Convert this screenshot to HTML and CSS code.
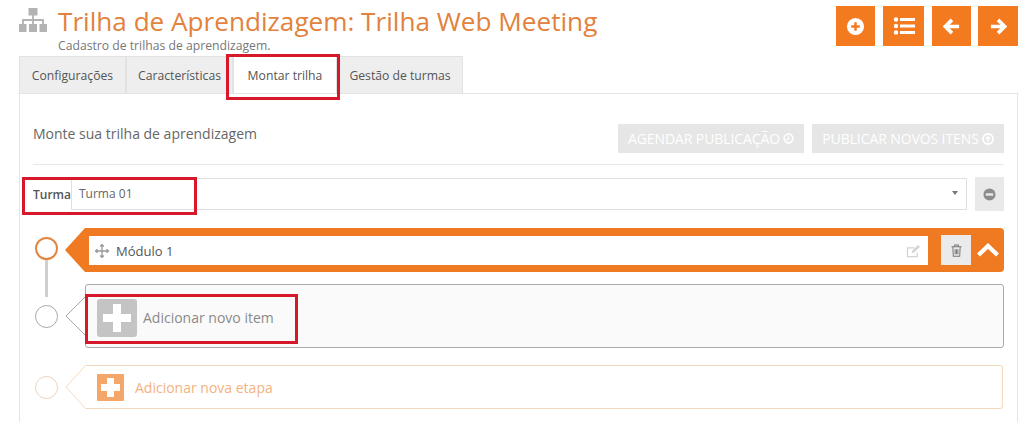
FILE: index.html
```html
<!DOCTYPE html>
<html lang="pt-BR">
<head>
<meta charset="utf-8">
<title>Trilha de Aprendizagem</title>
<link rel="stylesheet" href="styles.css">
</head>
<body>
<div class="page">
  <header class="top">
    <svg class="site-icon" viewBox="0 0 28 24" width="28" height="24"><path d="M9.500 0h9v7.500h-9zM0 16h7.500v8H0zM10 16h8v8h-8zM20.500 16H28v8h-7.500z" fill="#b3b3b3"/><path d="M14 7v5M4 16v-4h20v4M14 12v4" fill="none" stroke="#b3b3b3" stroke-width="1.800"/></svg>
    <div class="titles">
      <h1>Trilha de Aprendizagem: Trilha Web Meeting</h1>
      <p>Cadastro de trilhas de aprendizagem.</p>
    </div>
    <nav class="actions">
      <a class="act w39"><svg viewBox="0 0 20 20" width="19" height="19"><circle cx="10" cy="10" r="9" fill="#fff"/><path d="M10 5.500v9M5.500 10h9" stroke="#f47a20" stroke-width="2.600"/></svg></a>
      <a class="act w41"><svg viewBox="0 0 22 20" width="22" height="20"><g fill="#fff"><circle cx="3" cy="3.500" r="2.200"/><circle cx="3" cy="10" r="2.200"/><circle cx="3" cy="16.500" r="2.200"/><rect x="7" y="2" width="15" height="3"/><rect x="7" y="8.500" width="15" height="3"/><rect x="7" y="15" width="15" height="3"/></g></svg></a>
      <a class="act w39"><svg viewBox="0 0 20 20" width="19" height="19"><path d="M18 10H4M10.500 3L3.500 10l7 7" fill="none" stroke="#fff" stroke-width="3.800"/></svg></a>
      <a class="act w40 last"><svg viewBox="0 0 20 20" width="19" height="19"><path d="M2 10h14M9.500 3l7 7-7 7" fill="none" stroke="#fff" stroke-width="3.800"/></svg></a>
    </nav>
  </header>

  <ul class="tabs">
    <li class="tab">Configurações</li>
    <li class="tab">Características</li>
    <li class="tab active">Montar trilha</li>
    <li class="tab">Gestão de turmas</li>
  </ul>

  <section class="panel">
    <div class="panel-head">
      <h2>Monte sua trilha de aprendizagem</h2>
      <div class="publish">
        <button class="pub w186">AGENDAR PUBLICAÇÃO <svg viewBox="0 0 12 12" width="11" height="11"><circle cx="6" cy="6" r="4.700" fill="none" stroke="#fff" stroke-width="1.800"/><path d="M6 3.500V6.500L4 8" fill="none" stroke="#fff" stroke-width="1.300"/></svg></button>
        <button class="pub w192">PUBLICAR NOVOS ITENS <svg viewBox="0 0 12 12" width="12" height="12"><circle cx="6" cy="6" r="5" fill="none" stroke="#fff" stroke-width="1.800"/><path d="M6 9V3.800M3.800 6L6 3.800 8.200 6" fill="none" stroke="#fff" stroke-width="1.500"/></svg></button>
      </div>
    </div>

    <div class="turma-row">
      <label class="turma-label">Turma</label>
      <div class="select"><span>Turma 01</span><i class="caret"></i></div>
      <button class="minus"><svg viewBox="0 0 14 14" width="13" height="13"><circle cx="7" cy="7" r="6.500" fill="#8c8c8c"/><rect x="3" y="5.700" width="8" height="2.600" fill="#e9e9e9"/></svg></button>
    </div>

    <div class="track module-row">
      <span class="node node-orange"></span>
      <svg class="tip" viewBox="0 0 20 44" width="20" height="44"><path d="M20 0L0 22l20 22z" fill="#f07a22"/></svg>
      <div class="module-bar">
        <div class="module-input">
          <svg viewBox="0 0 14 14" width="14" height="14"><path d="M7 .500v13M.500 7h13M5.200 2.500L7 .500l1.800 2M5.200 11.500L7 13.500l1.800-2M2.500 5.200L.500 7l2 1.800M11.500 5.200L13.500 7l-2 1.800" fill="none" stroke="#999" stroke-width="1.300"/></svg>
          <span>Módulo 1</span>
          <svg class="edit" viewBox="0 0 16 14" width="15" height="13"><path d="M12 8v4.500H1.500V3H9" fill="none" stroke="#d2d2d2" stroke-width="1.300"/><path d="M6 8.500l.6-2.300L13 0l2 2-6.500 6z" fill="#d2d2d2"/></svg>
        </div>
        <button class="trash"><svg viewBox="0 0 12 14" width="11" height="13"><path d="M.500 3h11M4 3V1h4v2M2 3l.5 10.300h7L10 3M4.500 5.500v5.500M6 5.500v5.500M7.500 5.500v5.500" fill="none" stroke="#777" stroke-width="1.100"/></svg></button>
        <svg class="chevron" viewBox="0 0 24 14" width="24" height="14"><path d="M2.500 12L12 3l9.500 9" fill="none" stroke="#fff" stroke-width="4.200"/></svg>
      </div>
    </div>

    <div class="track item-row">
      <span class="node node-gray"></span>
      <svg class="tip" viewBox="0 0 21 40" width="21" height="40"><path d="M20.500 0.500L1 20l19.500 19.500" fill="none" stroke="#a8a8a8" stroke-width="1"/></svg>
      <div class="item-box">
        <span class="plus plus-gray"></span>
        <span class="item-text">Adicionar novo item</span>
      </div>
    </div>

    <div class="track step-row">
      <span class="node node-peach"></span>
      <svg class="tip" viewBox="0 0 21 44" width="21" height="44"><path d="M20.500 0.500L1 22l19.500 21.500" fill="none" stroke="#f5d9bf" stroke-width="1"/></svg>
      <div class="step-box">
        <span class="plus plus-orange"></span>
        <span class="step-text">Adicionar nova etapa</span>
      </div>
    </div>
  </section>

  <div class="mark mark-tab"></div>
  <div class="mark mark-turma"></div>
  <div class="mark mark-item"></div>
</div>
</body>
</html>
```
FILE: styles.css
```css
* { box-sizing: border-box; }
html, body { margin: 0; height: 422px; overflow: hidden; background: #fff; }
body { font-family: "Open Sans", "Liberation Sans", sans-serif; color: #666; }
.page { position: relative; width: 1024px; height: 422px; padding: 6px 6px 0 19px; }

.top { display: flex; align-items: flex-start; height: 50px; }
.site-icon { margin-top: 2px; flex: none; }
.titles { margin-left: 11px; flex: 1; }
h1 { margin: 0; font-size: 26.15px; line-height: 30px; font-weight: 400; color: #e2823c; white-space: nowrap; }
.titles p { margin: 3px 0 0; font-size: 12.2px; line-height: 14px; color: #777; }
.actions { display: flex; gap: 8px; }
.act { height: 40px; background: #f47a20; display: flex; align-items: center; justify-content: center; }
.w39 { width: 39px; }
.w40 { width: 40px; }
.w41 { width: 41px; }
.last { margin-left: -1px; }

.tabs { list-style: none; margin: 0; padding: 0; display: flex; height: 37px; }
.tab { background: #eeeeee; border: 1px solid #e2e2e2; border-bottom: 0; font-size: 12.2px; font-weight: 500; color: #555; display: flex; align-items: center; justify-content: center; padding: 0 12px; white-space: nowrap; }
.tab:nth-child(1) { width: 107px; }
.tab:nth-child(2) { width: 107px; }
.tab:nth-child(3) { width: 104px; background: #fff; }
.tab:nth-child(4) { width: 126px; }

.panel { border: 1px solid #e4e4e4; border-bottom: 0; height: 330px; padding: 30px 13px 0; }
.panel-head { display: flex; justify-content: space-between; height: 41px; border-bottom: 1px solid #e8e8e8; }
h2 { margin: 0; font-size: 14px; line-height: 20px; font-weight: 400; color: #666; }
.publish { display: flex; gap: 8px; height: 29px; }
.pub { height: 29px; padding: 0; background: #e6e6e6; border: 0; color: #fff; font: 400 14px "Open Sans", sans-serif; display: flex; align-items: center; justify-content: center; gap: 3px; white-space: nowrap; letter-spacing: -.1px; }
.w186 { width: 186px; }
.w192 { width: 192px; }

.turma-row { display: flex; align-items: center; margin-top: 12px; height: 34px; }
.turma-label { width: 38px; font-size: 12px; font-weight: 600; color: #555; }
.select { flex: 1; height: 32px; border: 1px solid #e0e0e0; display: flex; align-items: center; justify-content: space-between; padding: 0 8px 2px 7px; font-size: 12px; color: #666; }
.caret { width: 0; height: 0; border: 3px solid transparent; border-top: 4px solid #777; border-bottom: 0; }
.minus { width: 29px; height: 34px; margin-left: 8px; padding: 0; background: #e9e9e9; border: 0; display: flex; align-items: center; justify-content: center; }

.track { display: flex; align-items: center; }
.node { flex: none; width: 23px; height: 23px; margin: 0 7px 0 2px; border-radius: 50%; background: #fff; position: relative; }
.node-orange { border: 2px solid #e2853f; }
.node-orange::after { content: ""; position: absolute; left: 8px; top: 21px; width: 3px; height: 37px; background: #cfcfcf; }
.node-gray { border: 1px solid #a8a8a8; }
.node-peach { border: 1px solid #eed3bd; }
.tip { flex: none; display: block; }

.module-row { margin-top: 17px; height: 44px; }
.module-row .node { margin-top: -4px; }
.module-bar { flex: 1; height: 44px; background: #f07a22; border-radius: 0 4px 4px 0; display: flex; align-items: center; padding: 0 4px; }
.module-input { flex: none; width: 839px; height: 29px; background: #fff; display: flex; align-items: center; padding: 2px 7px 0 6px; font-size: 13px; color: #555; gap: 7px; }
.edit { margin-left: auto; }
.trash { flex: none; width: 30px; height: 30px; margin-left: 13px; padding: 0; background: #ebebeb; border: 0; display: flex; align-items: center; justify-content: center; }
.chevron { flex: none; margin-left: 5px; }

.item-row { margin-top: 12px; height: 64px; }
.item-box { flex: 1; height: 64px; border: 1px solid #ababab; border-radius: 3px; background: #fafafa; display: flex; align-items: center; padding: 3px 0 0 11px; margin-left: -1px; }
.plus { flex: none; position: relative; display: block; }
.plus::before, .plus::after { content: ""; position: absolute; background: #fff; }
.plus-gray { width: 40px; height: 38px; border-radius: 3px; background: #c4c4c4; }
.plus-gray::before { left: 6px; right: 6px; top: 15px; height: 8px; }
.plus-gray::after { left: 16px; width: 8px; top: 5px; bottom: 5px; }
.item-text { margin-left: 6px; font-size: 14px; font-weight: 500; color: #8a8a8a; }

.step-row { margin-top: 17px; height: 44px; width: 970px; }
.step-box { flex: 1; height: 44px; border: 1px solid #f5d9bf; border-left: 0; border-radius: 0 3px 3px 0; background: #fff; display: flex; align-items: center; padding-left: 12px; margin-left: -1px; }
.plus-orange { width: 27px; height: 27px; background: #f5a669; border-radius: 1px; }
.plus-orange::before { left: 4px; right: 4px; top: 10px; height: 7px; }
.plus-orange::after { left: 10px; width: 7px; top: 4px; bottom: 4px; }
.step-text { margin-left: 11px; font-size: 14px; font-weight: 500; color: #f3b27f; }

.mark { position: absolute; border: 3px solid #d7182a; pointer-events: none; }
.mark-tab { left: 226px; top: 54px; width: 114px; height: 46px; }
.mark-turma { left: 22px; top: 177px; width: 175px; height: 38px; }
.mark-item { left: 85px; top: 294px; width: 213px; height: 50px; }
```
